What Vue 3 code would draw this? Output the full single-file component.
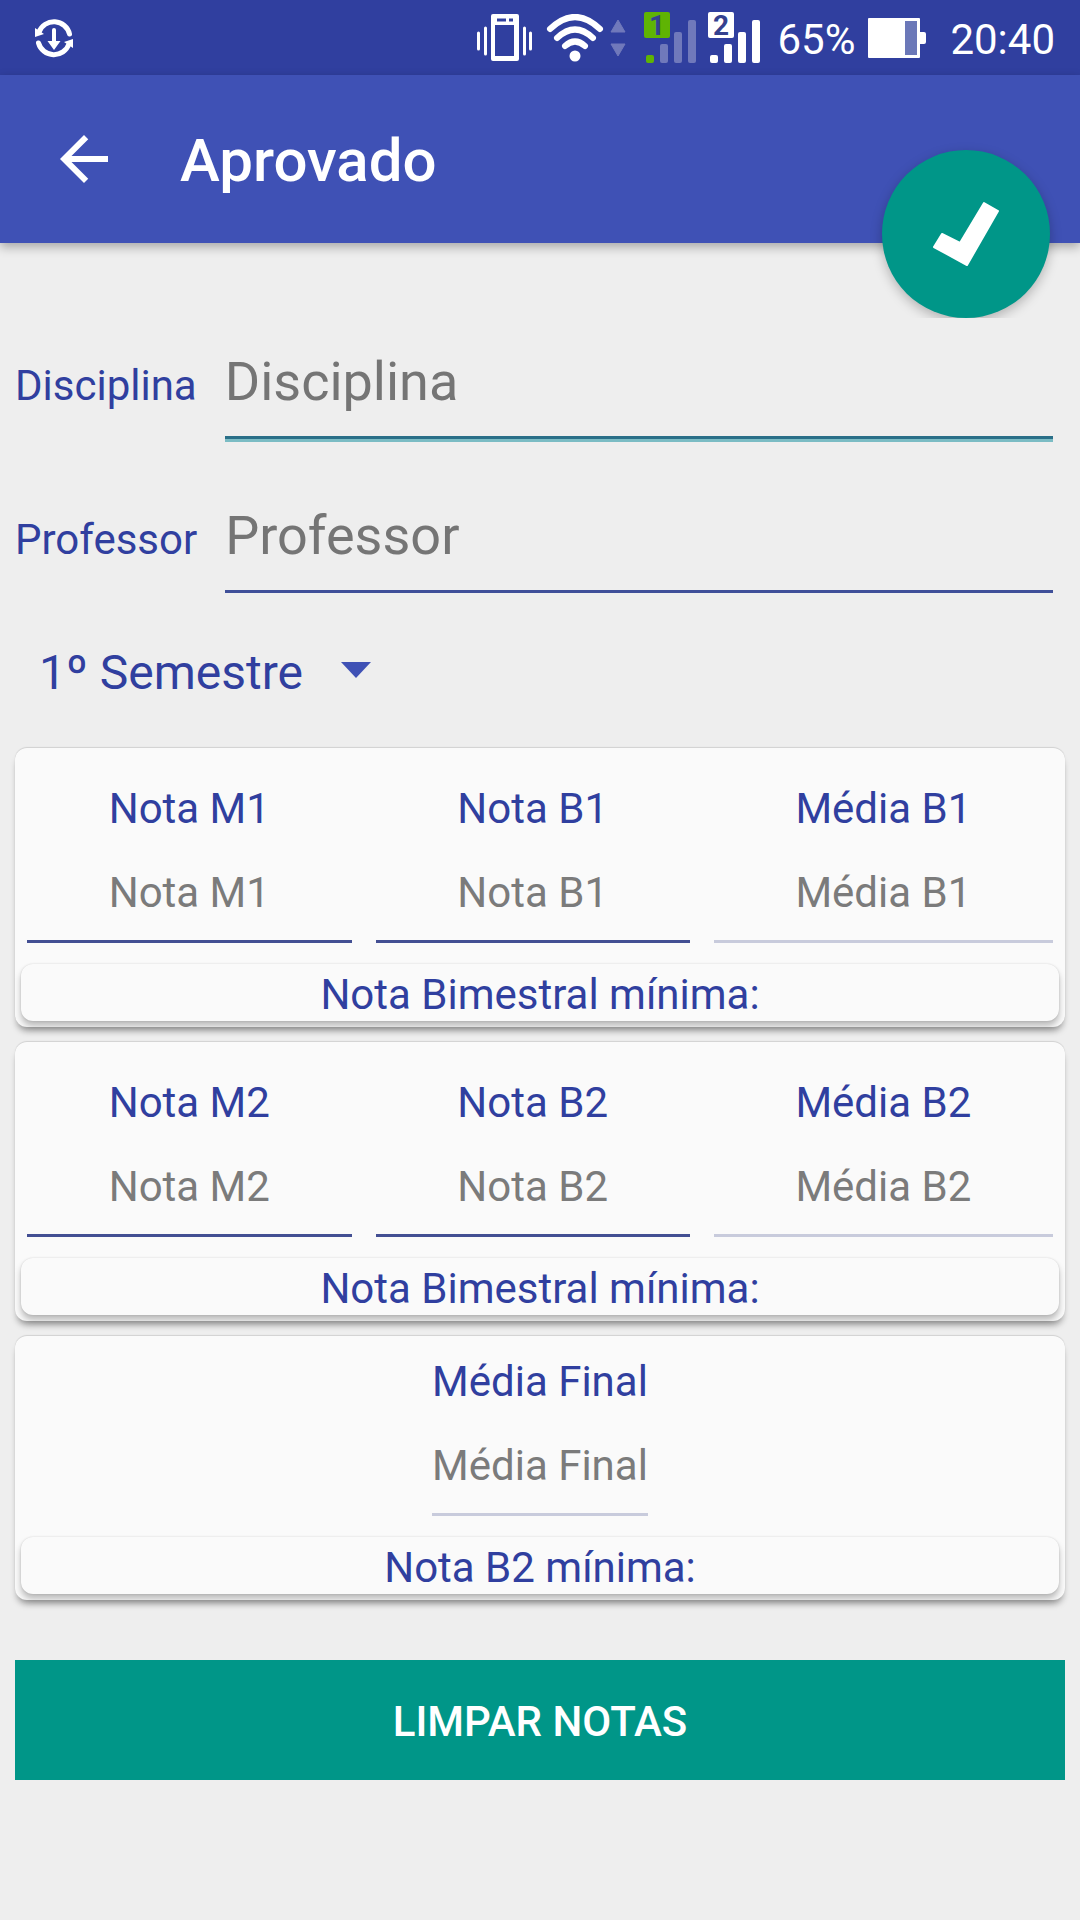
<script setup>
import { ref } from 'vue'

const subject = ref('')
const teacher = ref('')
const semester = ref('1º Semestre')
const semesters = ['1º Semestre', '2º Semestre']

const terms = [
  {
    id: 'b1',
    fields: [
      { id: 'm1', label: 'Nota M1' },
      { id: 'nb1', label: 'Nota B1' },
      { id: 'media1', label: 'Média B1', computed: true }
    ],
    minimum: 'Nota Bimestral mínima:'
  },
  {
    id: 'b2',
    fields: [
      { id: 'm2', label: 'Nota M2' },
      { id: 'nb2', label: 'Nota B2' },
      { id: 'media2', label: 'Média B2', computed: true }
    ],
    minimum: 'Nota Bimestral mínima:'
  },
  {
    id: 'final',
    fields: [{ id: 'mediaFinal', label: 'Média Final', computed: true }],
    minimum: 'Nota B2 mínima:'
  }
]

const grades = ref({})

function clearGrades() {
  grades.value = {}
}
</script>

<template>
  <div class="screen">
    <div class="status">
      <svg class="sync" width="40" height="40" viewBox="0 0 40 40">
        <g fill="none" stroke="#fff" stroke-width="5" stroke-linecap="round">
          <path d="M35.500 16A16 16 0 0 0 5 14" />
          <path d="M4.500 25A16 16 0 0 0 35 26" />
          <path d="M20 12V24" stroke-width="4" />
        </g>
        <path d="M1 10L1 19L10 16ZM39 30L39 21L30 24ZM13.500 23H26.500L20 32Z" fill="#fff" />
      </svg>
      <div class="tray">
        <svg class="vibrate" width="56" height="48" viewBox="0 0 56 48">
          <path fill="#fff" fill-rule="evenodd" d="M17 0H41Q43 0 43 2V45Q43 47 41 47H17Q15 47 15 45V2Q15 0 17 0ZM19 11V42H38V11ZM21 4.500V7.500H30V4.500ZM33 4.500V7.500H37V4.500Z" />
          <path d="M2.500 19V35M9.500 14V40M48.500 14V40M54.500 19V35" stroke="#fff" stroke-width="3" stroke-linecap="round" />
        </svg>
        <svg class="wifi" width="58" height="48" viewBox="0 0 58 48">
          <g fill="none" stroke="#fff" stroke-width="6" stroke-linecap="round">
            <path d="M4 15Q29 -9 54 15" />
            <path d="M11 24Q29 7 47 24" />
            <path d="M19 32Q29 23 39 32" />
          </g>
          <circle cx="29" cy="42" r="5.500" fill="#fff" />
        </svg>
        <svg class="traffic" width="16" height="38" viewBox="0 0 16 38">
          <path d="M8 1L15 13H1ZM8 37L15 25H1Z" fill="#7079bb" stroke="#7079bb" stroke-linejoin="round" />
        </svg>
        <svg class="sim" width="53" height="52" viewBox="0 0 53 52">
          <rect width="26" height="26" rx="2" fill="#5fb404" />
          <text x="13" y="23" text-anchor="middle" class="digit">1</text>
          <rect x="2" y="43" width="8" height="8" rx="2" fill="#5fb404" />
          <g fill="#7079bb">
            <rect x="16" y="32" width="8" height="19" rx="2" />
            <rect x="30" y="20" width="8" height="31" rx="2" />
            <rect x="44" y="8" width="8" height="43" rx="2" />
          </g>
        </svg>
        <svg class="sim second" width="53" height="52" viewBox="0 0 53 52">
          <g fill="#fff">
            <rect width="26" height="26" rx="2" />
            <rect x="2" y="43" width="8" height="8" rx="2" />
            <rect x="16" y="32" width="8" height="19" rx="2" />
            <rect x="30" y="20" width="8" height="31" rx="2" />
            <rect x="44" y="8" width="8" height="43" rx="2" />
          </g>
          <text x="13" y="23" text-anchor="middle" class="digit">2</text>
        </svg>
        <span class="reading level">65%</span>
        <svg class="battery" width="58" height="40" viewBox="0 0 58 40">
          <path d="M1 0H51Q52 0 52 1V14H56Q58 14 58 16V24Q58 26 56 26H52V39Q52 40 51 40H1Q0 40 0 39V1Q0 0 1 0Z" fill="#fff" />
          <rect x="37" y="3" width="12" height="34" fill="#6b78b8" />
        </svg>
        <span class="reading">20:40</span>
      </div>
    </div>

    <header class="bar">
      <button class="back" type="button" aria-label="Voltar">
        <svg width="72" height="72" viewBox="0 0 24 24">
          <path d="M20 11H7.830l5.590-5.590L12 4l-8 8 8 8 1.410-1.410L7.830 13H20v-2z" fill="#fff" />
        </svg>
      </button>
      <h1>Aprovado</h1>
      <div class="fab-area">
        <button class="fab" type="button" aria-label="Salvar">
          <svg width="168" height="168" viewBox="0 0 168 168">
            <path d="M52 97L60 84L78 93L102 53L116 61L85 115Z" fill="#fff" stroke="#fff" stroke-width="2" stroke-linejoin="round" />
          </svg>
        </button>
      </div>
    </header>

    <main>
      <div class="field">
        <label for="subject">Disciplina</label>
        <input id="subject" v-model="subject" class="active" type="text" placeholder="Disciplina" />
      </div>
      <div class="field">
        <label for="teacher">Professor</label>
        <input id="teacher" v-model="teacher" type="text" placeholder="Professor" />
      </div>

      <div class="picker">
        <select v-model="semester" aria-label="Semestre">
          <option v-for="s in semesters" :key="s">{{ s }}</option>
        </select>
        <svg width="30" height="16" viewBox="0 0 30 16"><path d="M0 0H30L15 16Z" fill="#3f51b5" /></svg>
      </div>

      <section v-for="term in terms" :key="term.id" class="card" :class="{ single: term.fields.length === 1 }">
        <div class="grades">
          <div v-for="f in term.fields" :key="f.id" class="grade">
            <label :for="f.id">{{ f.label }}</label>
            <input :id="f.id" v-model="grades[f.id]" type="text" inputmode="decimal" :placeholder="f.label" :disabled="f.computed" />
          </div>
        </div>
        <p class="minimum">{{ term.minimum }}</p>
      </section>

      <button class="clear" type="button" @click="clearGrades">LIMPAR NOTAS</button>
    </main>
  </div>
</template>

<style>
body {
  margin: 0;
  background: #eeeeee;
}
</style>

<style scoped>
.screen {
  min-height: 100vh;
  background: #eeeeee;
  color: #303f9f;
  font-family: Roboto, "Noto Sans", sans-serif;
  font-size: 42px;
  line-height: 50px;
}

button,
input,
select {
  margin: 0;
  padding: 0;
  border: 0;
  border-radius: 0;
  background: none;
  color: inherit;
  font: inherit;
  outline: none;
}

svg {
  display: block;
  flex: none;
}

.status {
  display: flex;
  align-items: center;
  justify-content: space-between;
  height: 75px;
  padding: 0 25px 0 34px;
  background: #303f9f;
  color: #fff;
}

.tray {
  display: flex;
  align-items: center;
}

.wifi {
  margin-left: 14px;
}

.traffic {
  margin-left: 6px;
}

.sim {
  margin-left: 18px;
  overflow: visible;
}

.second {
  margin-left: 11px;
}

.digit {
  fill: #34418f;
  font-size: 28px;
  font-weight: 700;
}

.reading {
  padding-top: 4px;
}

.level {
  margin-left: 16px;
}

.battery {
  margin-left: 13px;
  margin-right: 24px;
}

.bar {
  position: relative;
  display: flex;
  align-items: center;
  height: 168px;
  padding: 0 48px;
  background: #3f51b5;
  box-shadow: 0 4px 10px rgba(0, 0, 0, 0.3);
  color: #fff;
}

.back {
  margin-right: 60px;
}

h1 {
  margin: 0;
  padding-top: 4px;
  font-size: 60px;
  font-weight: 500;
  line-height: 70px;
}

.fab-area {
  position: absolute;
  top: 63px;
  right: 6px;
  padding: 12px 24px 0;
  overflow: hidden;
}

.fab {
  display: block;
  border-radius: 50%;
  background: #009688;
  box-shadow: 0 4px 12px rgba(0, 0, 0, 0.25);
}

main {
  display: flex;
  flex-direction: column;
  padding: 107px 15px 60px;
}

.field {
  display: flex;
  align-items: baseline;
  gap: 28px;
  margin-bottom: 65px;
  padding-right: 12px;
}

.field input {
  flex: 1;
  min-width: 0;
  height: 64px;
  padding-bottom: 22px;
  border-bottom: 3px solid #3f4f99;
  font-size: 54px;
  line-height: 64px;
}

.field input.active {
  border-bottom-color: #2a6f88;
  box-shadow: 0 3px #7bbcc4;
}

input::placeholder {
  color: #757575;
  opacity: 1;
}

.picker {
  display: grid;
  align-items: center;
  align-self: flex-start;
  margin: -13px 0 47px 24px;
}

.picker select {
  grid-area: 1 / 1;
  height: 56px;
  padding-right: 68px;
  appearance: none;
  font-size: 48px;
  line-height: 56px;
}

.picker svg {
  grid-area: 1 / 1;
  justify-self: end;
  margin-bottom: 6px;
  pointer-events: none;
}

.card {
  margin-bottom: 15px;
  padding: 36px 6px 6px;
  border-radius: 12px;
  background: #fafafa;
  box-shadow: 0 6px 6px -2px rgba(0, 0, 0, 0.35), 0 -1px 1px rgba(0, 0, 0, 0.12);
}

.card.single {
  padding-top: 21px;
}

.grades {
  display: flex;
  gap: 24px;
  padding: 0 6px 21px;
}

.single .grades {
  justify-content: center;
}

.grade {
  display: flex;
  flex: 1 1 auto;
  flex-direction: column;
  gap: 34px;
  text-align: center;
}

.single .grade {
  flex-grow: 0;
}

.grade input {
  width: 0;
  min-width: 100%;
  height: 50px;
  padding-bottom: 22px;
  border-bottom: 3px solid #434f93;
  text-align: center;
}

.grade input:disabled {
  border-bottom-color: #c8cbdc;
}

.grade input::placeholder {
  color: #7b7b7b;
}

.minimum {
  margin: 0;
  padding-top: 4px;
  border-radius: 12px;
  background: #fafafa;
  box-shadow: 0 5px 6px rgba(0, 0, 0, 0.25), 0 0 2px rgba(0, 0, 0, 0.15);
  line-height: 53px;
  text-align: center;
}

.clear {
  margin-top: 45px;
  padding: 37px 0 33px;
  background: #009688;
  color: #fff;
  font-weight: 500;
}
</style>
